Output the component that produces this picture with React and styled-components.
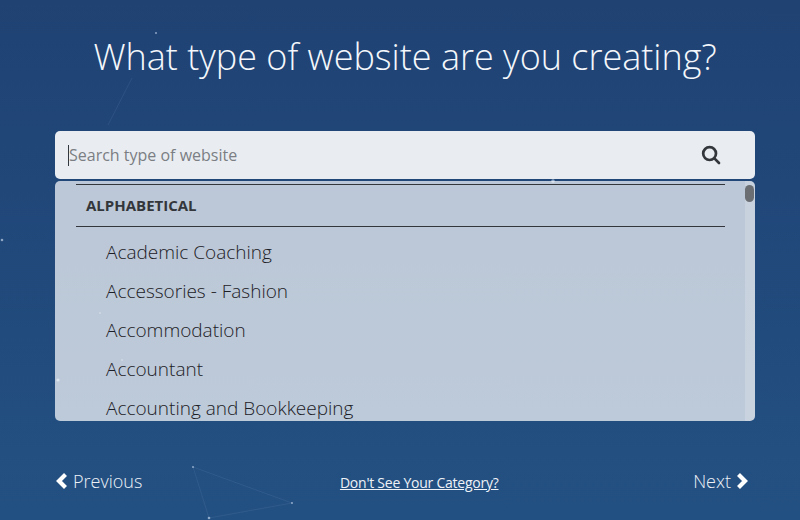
import React from 'react'
import styled, { createGlobalStyle } from 'styled-components'

const GlobalStyle = createGlobalStyle`
  html, body {
    margin: 0;
    padding: 0;
    height: 100%;
    overflow: hidden;
  }
  body {
    font-family: 'Open Sans', 'Liberation Sans', sans-serif;
  }
`

const Page = styled.div`
  position: relative;
  width: 800px;
  height: 520px;
  overflow: hidden;
  background: linear-gradient(180deg, #1f4273 0%, #235082 100%);
  display: flex;
  flex-direction: column;
`

const Particles = styled.svg`
  position: absolute;
  inset: 0;
  width: 800px;
  height: 520px;
`

const Content = styled.div`
  position: relative;
  display: flex;
  flex-direction: column;
  padding: 0 45px 0 55px;
`

const Title = styled.h1`
  margin: 0;
  height: 131px;
  padding-top: 32px;
  box-sizing: border-box;
  font-size: 36px;
  line-height: 49px;
  font-weight: 300;
  color: #f4f7fb;
  text-align: center;
  white-space: nowrap;
`

const SearchBar = styled.div`
  display: flex;
  align-items: center;
  justify-content: space-between;
  height: 48px;
  box-sizing: border-box;
  padding: 0 34px 0 13px;
  background: rgba(255, 255, 255, 0.9);
  border-radius: 5px;
`

const SearchText = styled.span`
  font-size: 16px;
  color: #7b7e83;
  border-left: 1px solid #33383f;
  line-height: 21px;
`

const ListPanel = styled.div`
  position: relative;
  height: 240px;
  margin-top: 2px;
  padding: 3px 30px 0 21px;
  box-sizing: border-box;
  background: rgba(255, 255, 255, 0.7);
  border-radius: 5px;
  overflow: hidden;
`

const GroupHeading = styled.div`
  height: 43px;
  box-sizing: border-box;
  border-top: 1px solid #33363b;
  border-bottom: 1px solid #33363b;
  padding-left: 10px;
  font-size: 15px;
  line-height: 41px;
  font-weight: 700;
  color: #33363b;
`

const List = styled.ul`
  list-style: none;
  margin: 6px 0 0;
  padding: 0 0 0 30px;
`

const Item = styled.li`
  height: 39px;
  font-size: 19px;
  line-height: 39px;
  font-weight: 300;
  color: #1c2026;
  white-space: nowrap;
`

const ScrollTrack = styled.div`
  position: absolute;
  top: 0;
  right: 0;
  bottom: 0;
  width: 10px;
  background: rgba(255, 255, 255, 0.18);
`

const ScrollThumb = styled.div`
  position: absolute;
  top: 4px;
  right: 1px;
  width: 9px;
  height: 17px;
  border-radius: 5px;
  background: #6b6f74;
`

const Footer = styled.div`
  display: flex;
  align-items: center;
  justify-content: space-between;
  height: 42px;
  margin-top: 39px;
  padding: 0 7px 0 1px;
`

const NavLink = styled.a`
  display: flex;
  align-items: center;
  gap: 5px;
  font-size: 18px;
  font-weight: 300;
  color: #eef2f7;
  line-height: 24px;
`

const Chevron = styled.svg`
  width: 12px;
  height: 16px;
  fill: none;
  stroke: #ffffff;
  stroke-width: 4.2;
`

const CategoryLink = styled.a`
  font-size: 14px;
  font-weight: 400;
  letter-spacing: -0.24px;
  color: #eef2f7;
  text-decoration: underline;
  margin: 2px 0 0 3px;
`

const dots = [
  [156, 33, 1], [2, 240, 1.3], [58, 380, 1.6], [553, 181, 1.8], [193, 467, 1],
  [292, 503, 1], [209, 518, 1.3], [100, 313, 0.8], [122, 360, 0.8],
]

const lines = [
  [193, 467, 292, 503],
  [193, 467, 209, 518],
  [292, 503, 209, 518],
  [132, 78, 108, 125],
]

const items = [
  'Academic Coaching',
  'Accessories - Fashion',
  'Accommodation',
  'Accountant',
  'Accounting and Bookkeeping',
]

function App() {
  return (
    <Page>
      <GlobalStyle />
      <Particles viewBox="0 0 800 520">
        {lines.map(([x1, y1, x2, y2], i) => (
          <line key={i} x1={x1} y1={y1} x2={x2} y2={y2} stroke="#8fb0d8" strokeOpacity="0.12" strokeWidth="1" />
        ))}
        {dots.map(([cx, cy, r], i) => (
          <circle key={i} cx={cx} cy={cy} r={r} fill="#c8d8ee" fillOpacity="0.65" />
        ))}
      </Particles>
      <Content>
        <Title>What type of website are you creating?</Title>
        <SearchBar>
          <SearchText>Search type of website</SearchText>
          <svg width="20" height="20" viewBox="0 0 20 20" fill="none" stroke="#33363b" strokeWidth="2.7" strokeLinecap="round">
            <circle cx="8.6" cy="8.6" r="6.4" />
            <line x1="13.4" y1="13.4" x2="18" y2="18" />
          </svg>
        </SearchBar>
        <ListPanel>
          <GroupHeading>ALPHABETICAL</GroupHeading>
          <List>
            {items.map((name) => (
              <Item key={name}>{name}</Item>
            ))}
          </List>
          <ScrollTrack />
          <ScrollThumb />
        </ListPanel>
        <Footer>
          <NavLink>
            <Chevron viewBox="0 0 12 16">
              <polyline points="9.5,1.5 3,8 9.5,14.5" />
            </Chevron>
            Previous
          </NavLink>
          <CategoryLink>Don't See Your Category?</CategoryLink>
          <NavLink>
            Next
            <Chevron viewBox="0 0 12 16">
              <polyline points="2.5,1.5 9,8 2.5,14.5" />
            </Chevron>
          </NavLink>
        </Footer>
      </Content>
    </Page>
  )
}

export default App
